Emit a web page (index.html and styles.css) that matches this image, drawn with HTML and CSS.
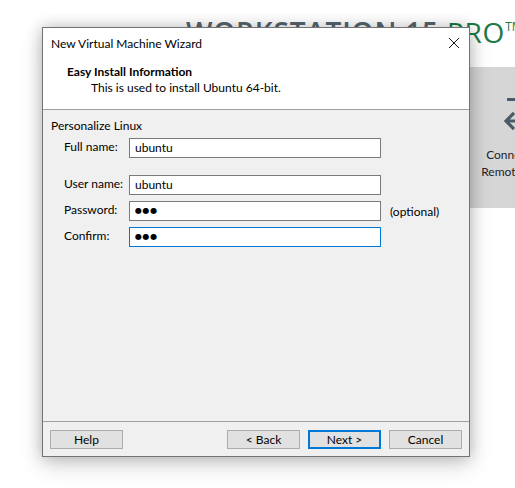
FILE: index.html
```html
<!DOCTYPE html>
<html lang="en">
<head>
<meta charset="utf-8">
<title>New Virtual Machine Wizard</title>
<link rel="stylesheet" href="styles.css">
</head>
<body>
  <!-- Workstation home tab behind the wizard -->
  <div class="desk">
    <div class="brand"><span class="brand-name">WORKSTATION 15</span> <span class="brand-ed">PRO<sup>TM</sup></span></div>
    <div class="tiles">
      <div class="tile">
        <svg class="tile-icon" viewBox="0 0 34 36" width="34" height="36"><path d="M8 4h22v28H8" fill="none" stroke="#4b5a66" stroke-width="3"/></svg>
        <p>Create a New<br>Virtual Machine</p>
      </div>
      <div class="tile">
        <svg class="tile-icon" viewBox="0 0 34 36" width="34" height="36"><path d="M4 8h26v24H4z" fill="none" stroke="#4b5a66" stroke-width="3"/></svg>
        <p>Open a Virtual<br>Machine</p>
      </div>
      <div class="tile">
        <svg class="tile-icon" viewBox="0 0 34 36" width="34" height="36">
          <path d="M4 3.5h26v29H14" fill="none" stroke="#4b5a66" stroke-width="3"/>
          <path d="M3 25h22M11 17l-8 8 8 8" fill="none" stroke="#4b5a66" stroke-width="3.2"/>
        </svg>
        <p>Connect to a<br>Remote Server</p>
      </div>
    </div>
  </div>

  <!-- Wizard dialog -->
  <div class="wizard">
    <div class="titlebar">
      <span class="title">New Virtual Machine Wizard</span>
      <svg class="close" viewBox="0 0 10 10" width="10" height="10"><path d="M0 0L10 10M10 0L0 10" stroke="#111" stroke-width="1"/></svg>
    </div>
    <div class="header">
      <div class="heading">Easy Install Information</div>
      <div class="subheading">This is used to install Ubuntu 64-bit.</div>
    </div>
    <div class="content">
      <div class="group-title">Personalize Linux</div>
      <div class="form">
        <div class="field spaced">
          <span class="label">Full name:</span>
          <div class="box">ubuntu</div>
        </div>
        <div class="field">
          <span class="label">User name:</span>
          <div class="box">ubuntu</div>
        </div>
        <div class="field">
          <span class="label">Password:</span>
          <div class="box"><span class="dots">●●●</span></div>
          <span class="hint">(optional)</span>
        </div>
        <div class="field">
          <span class="label">Confirm:</span>
          <div class="box focused"><span class="dots">●●●</span></div>
        </div>
      </div>
    </div>
    <div class="footer">
      <button class="btn">Help</button>
      <div class="nav">
        <button class="btn">&lt; Back</button>
        <button class="btn default">Next &gt;</button>
        <button class="btn">Cancel</button>
      </div>
    </div>
  </div>
</body>
</html>
```

FILE: styles.css
```css
html, body {
  margin: 0;
  padding: 0;
}

body {
  width: 515px;
  height: 488px;
  overflow: hidden;
  position: relative;
  background: #ffffff;
  font-family: Lato, "Open Sans", sans-serif;
  font-size: 12px;
  color: #000;
}

/* ---------- home tab ---------- */
.desk {
  padding-top: 16px;
}

.brand {
  height: 32px;
  margin-left: 186px;
  white-space: nowrap;
  font-family: "Open Sans", sans-serif;
  font-size: 28px;
  line-height: 32px;
  letter-spacing: 0.8px;
}

.brand-name {
  color: #55646e;
  font-weight: 600;
}

.brand-ed {
  color: #1d7b45;
  font-weight: 400;
}

.brand-ed sup {
  font-size: 12px;
  line-height: 0;
  vertical-align: 12px;
  letter-spacing: 0;
}

.tiles {
  display: flex;
  gap: 10px;
  margin-top: 19px;
  margin-left: 150px;
}

.tile {
  flex: 0 0 140px;
  height: 141px;
  box-sizing: border-box;
  padding-top: 29px;
  background: #d6d6d6;
  text-align: center;
  color: #1d1d2b;
}

.tile-icon {
  display: block;
  margin: 0 auto;
}

.tile p {
  margin: 14px 0 0;
  font-size: 12px;
  line-height: 17px;
}

/* ---------- wizard ---------- */
.wizard {
  position: absolute;
  left: 42px;
  top: 27px;
  width: 428px;
  height: 430px;
  box-sizing: border-box;
  border: 1px solid #737373;
  background: #f0f0f0;
  display: flex;
  flex-direction: column;
  box-shadow: 0 0 14px rgba(0, 0, 0, 0.22), 0 8px 22px rgba(0, 0, 0, 0.16);
}

.titlebar {
  height: 31px;
  flex: none;
  display: flex;
  align-items: center;
  justify-content: space-between;
  padding: 0 10px 0 8px;
  background: #fff;
}

.title {
  font-size: 12px;
  line-height: 16px;
}

.close {
  display: block;
  margin-top: -2px;
}

.header {
  flex: none;
  height: 51px;
  padding: 5px 0 0 24px;
  box-sizing: border-box;
  background: #fff;
  border-bottom: 1px solid #a0a0a0;
  line-height: 16px;
}

.heading {
  font-weight: 700;
}

.subheading {
  padding-left: 24px;
}

.content {
  flex: 1;
  padding: 8px 0 0 8px;
}

.group-title {
  line-height: 16px;
}

.form {
  margin: 4px 0 0 13px;
}

.field {
  display: grid;
  grid-template-columns: 65px 252px auto;
  align-items: center;
}

.field + .field {
  margin-top: 6px;
}

.field.spaced {
  margin-bottom: 17px;
}

.label {
  line-height: 16px;
  margin-top: -2px;
}

.box {
  height: 20px;
  box-sizing: border-box;
  border: 1px solid #7a7a7a;
  background: #fff;
  padding-left: 5px;
  line-height: 18px;
}

.box.focused {
  border-color: #0078d7;
}

.dots {
  font-family: "DejaVu Sans", sans-serif;
  font-size: 8px;
  letter-spacing: 0.6px;
  vertical-align: top;
}

.hint {
  padding-left: 9px;
}

.footer {
  flex: none;
  display: flex;
  align-items: flex-start;
  padding: 8px 7px 7px;
  border-top: 1px solid #a0a0a0;
}

.nav {
  margin-left: auto;
  display: flex;
  gap: 8px;
}

.btn {
  width: 73px;
  height: 19px;
  box-sizing: border-box;
  margin: 0;
  padding: 0;
  border: 1px solid #adadad;
  background: #e1e1e1;
  font-family: Lato, "Open Sans", sans-serif;
  font-size: 12px;
  line-height: 16px;
  color: #000;
}

.btn.default {
  border: 2px solid #0078d7;
}
```
